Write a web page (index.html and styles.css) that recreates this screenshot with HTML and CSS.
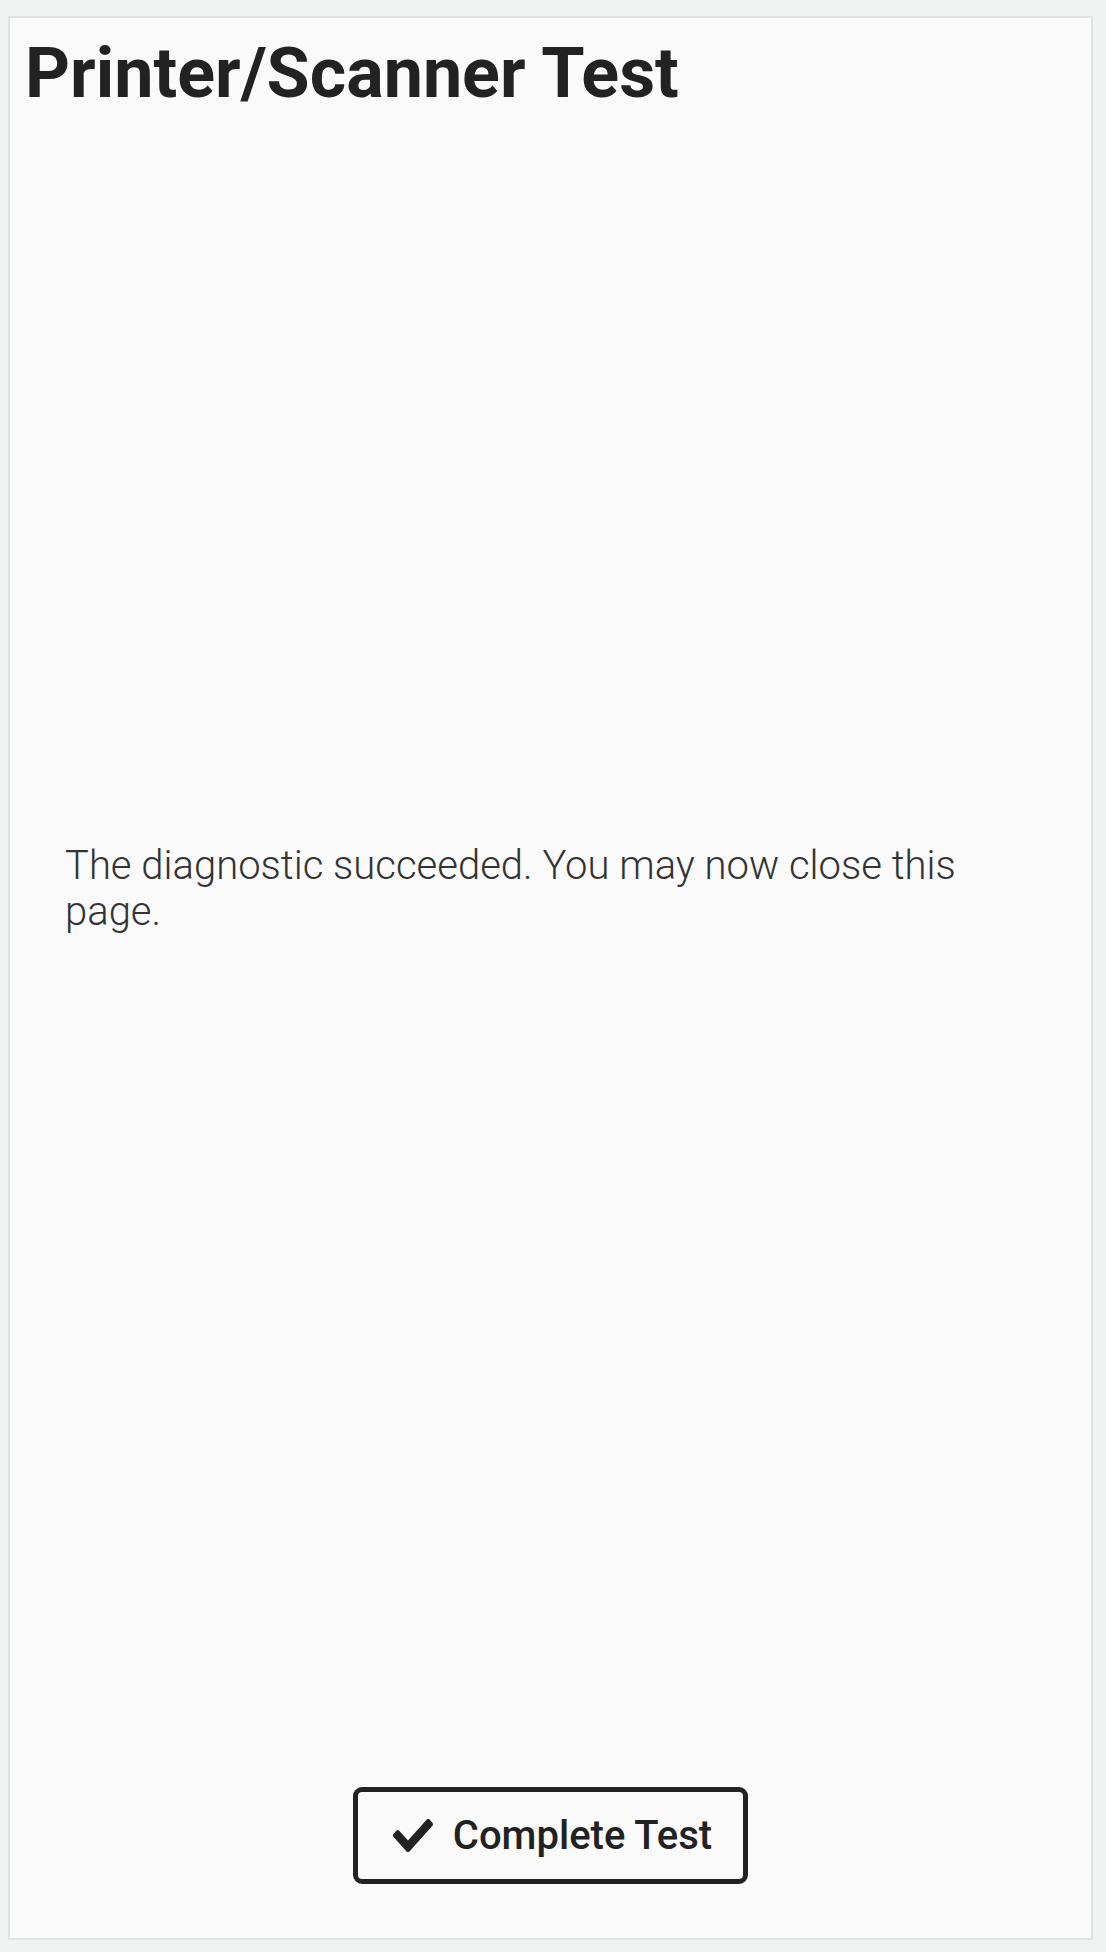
FILE: index.html
```html
<!DOCTYPE html>
<html>
<head>
<meta charset="utf-8">
<link rel="stylesheet" href="styles.css">
</head>
<body>
<div class="card">
  <h1 class="title">Printer/Scanner Test</h1>
  <div class="content">
    <p class="message">The diagnostic succeeded. You may now close this page.</p>
  </div>
  <div class="actions">
    <button class="btn">
      <svg class="check" viewBox="0 66 512 380" preserveAspectRatio="none" width="40" height="33"><path fill="#222" d="M173.9 439.4l-166.4-166.4c-10-10-10-26.2 0-36.2l36.2-36.2c10-10 26.2-10 36.2 0L192 312.7 432.1 72.6c10-10 26.2-10 36.2 0l36.2 36.2c10 10 10 26.2 0 36.2l-294.4 294.4c-10 10-26.2 10-36.2 0z"/></svg>
      <span>Complete Test</span>
    </button>
  </div>
</div>
</body>
</html>
```
FILE: styles.css
```css
html, body {
  margin: 0;
  padding: 0;
}
body {
  background: #f1f2f2;
  font-family: Roboto, "Noto Sans", sans-serif;
  color: #222;
  padding: 16px 13px 12px 8px;
}
.card {
  box-sizing: border-box;
  height: 1924px;
  background: #fafafa;
  border: 2px solid #e2e2e2;
  display: flex;
  flex-direction: column;
  padding: 0 15px;
}
.title {
  margin: 13px 0 0 0;
  font-size: 70px;
  font-weight: 700;
  line-height: 1.2;
  color: #222;
}
.content {
  flex: 1;
  display: flex;
  align-items: center;
  padding: 0 40px 124px 40px;
}
.message {
  margin: 0;
  max-width: 960px;
  font-size: 40px;
  font-weight: 300;
  line-height: 46px;
  color: #333;
}
.actions {
  display: flex;
  justify-content: center;
  padding-bottom: 54px;
}
.btn {
  display: flex;
  align-items: center;
  gap: 20px;
  box-sizing: border-box;
  width: 395px;
  height: 97px;
  justify-content: center;
  background: #fafafa;
  border: 5px solid #222;
  border-radius: 9px;
  font-family: Roboto, sans-serif;
  font-size: 40px;
  font-weight: 500;
  color: #222;
  padding: 0 0 0 4px;
}
```
